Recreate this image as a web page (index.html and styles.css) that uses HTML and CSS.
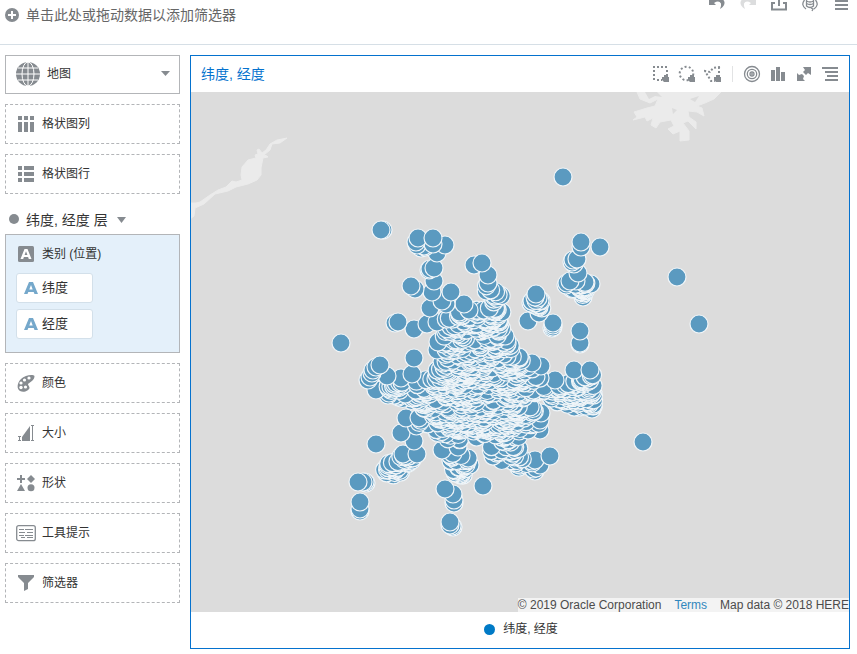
FILE: index.html
```html
<!DOCTYPE html>
<html lang="zh-CN">
<head>
<meta charset="utf-8">
<meta name="viewport" content="width=device-width, initial-scale=1">
<title>纬度, 经度</title>
<link rel="stylesheet" href="styles.css">
</head>
<body>
<header class="topbar">
  <button class="add-filter" type="button">
    <svg width="14" height="14" viewBox="0 0 14 14"><circle cx="7" cy="7" r="7" fill="#868b90"/><path d="M7 3v8M3 7h8" stroke="#fff" stroke-width="2"/></svg>
    <span>单击此处或拖动数据以添加筛选器</span>
  </button>
  <nav class="actions">
    <button type="button" aria-label="撤消"><svg width="18" height="12" viewBox="0 0 18 12"><path d="M1 0v5h7L6 3Q11 0 13 3.500 13.500 6 12 9 17 6 16.500 2L15.500 0z" fill="#868b90"/></svg></button>
    <button type="button" aria-label="重做"><svg width="18" height="12" viewBox="0 0 18 12"><path d="M17 0v5h-7l2-2Q7 0 5 3.500 4.500 6 6 9 1 6 1.500 2L2.500 0z" fill="#dcddde"/></svg></button>
    <button type="button" aria-label="导出"><svg width="18" height="12" viewBox="0 0 18 12"><path d="M5 3H2v6.500h14V3h-3M9 0v6" fill="none" stroke="#868b90" stroke-width="2"/></svg></button>
    <button type="button" aria-label="数据"><svg width="18" height="12" viewBox="0 0 18 12"><path d="M3.500 0Q-.5 5 5 9M14.500 0q4 5-1.500 9M5.500 0v6Q9 9 12.500 6V0M5.500 1q3.500 2 7 0M5.500 3.500q3.500 2 7 0M10 8l2 1-1 2" fill="none" stroke="#868b90" stroke-width="1.300"/></svg></button>
    <button type="button" aria-label="菜单"><svg width="18" height="12" viewBox="0 0 18 12"><path d="M3 1h13M3 5h13M3 9h13" stroke="#868b90" stroke-width="2"/></svg></button>
  </nav>
</header>
<main class="workspace">
  <aside class="grammar">
    <div class="chart-type">
      <svg width="24" height="24" viewBox="0 0 24 24"><circle cx="12" cy="12" r="12" fill="#868b90"/><path d="M12 0v24M0 12h24M2 6h20M2 18h20" stroke="#fff"/><ellipse cx="12" cy="12" rx="6" ry="12" fill="none" stroke="#fff"/></svg>
      <select aria-label="图表类型"><option>地图</option></select>
      <svg width="10" height="6" viewBox="0 0 10 6"><path d="M0 0h9L4.500 5z" fill="#868b90"/></svg>
    </div>
    <button class="zone" type="button"><svg width="20" height="20" viewBox="0 0 20 20"><path d="M2 2h4v4H2zm6 0h4v4H8zm6 0h4v4h-4zM2 8h4v10H2zm6 0h4v10H8zm6 0h4v10h-4z" fill="#868b90"/></svg>格状图列</button>
    <button class="zone" type="button"><svg width="20" height="20" viewBox="0 0 20 20"><path d="M2 2h4v4H2zm6 0h10v4H8zM2 8h4v4H2zm6 0h10v4H8zM2 14h4v4H2zm6 0h10v4H8z" fill="#868b90"/></svg>格状图行</button>
    <button class="layer" type="button">
      <svg width="12" height="12" viewBox="0 0 12 12"><circle cx="6" cy="5" r="5" fill="#868b90"/></svg>
      <span>纬度, 经度 层</span>
      <svg width="10" height="6" viewBox="0 0 10 6"><path d="M0 0h9L4.500 6z" fill="#868b90"/></svg>
    </button>
    <section class="category">
      <h2><svg width="20" height="20" viewBox="0 0 20 20"><rect x="2" y="2" width="16" height="16" rx="1.500" fill="#868b90"/><path fill-rule="evenodd" d="M8.500 5h3L15.500 15h-2.700l-.7-2H7.900l-.7 2H4.500zM10 7.300 8.600 11h2.800z" fill="#fff"/></svg>类别 (位置)</h2>
      <button class="chip" type="button"><svg width="14" height="14" viewBox="0 0 14 14"><path fill-rule="evenodd" d="M5 1h4l5 12h-3.500l-.8-2H4.300l-.8 2H0zM7 4 5.300 8.500h3.400z" fill="#75a8cb"/></svg>纬度</button>
      <button class="chip" type="button"><svg width="14" height="14" viewBox="0 0 14 14"><path fill-rule="evenodd" d="M5 1h4l5 12h-3.500l-.8-2H4.300l-.8 2H0zM7 4 5.300 8.500h3.400z" fill="#75a8cb"/></svg>经度</button>
    </section>
    <button class="zone" type="button"><svg width="20" height="20" viewBox="0 0 20 20"><path d="M18.500 3C17 1 9 2 5 6c-4 4-4.500 10-1 12 4 2 9-.5 9.500-3 .3-2-2.500-3-1-4.500 2-1.500 6-3.500 6-7.500z" fill="#868b90"/><g fill="#fff"><circle cx="13" cy="5" r="1.600"/><circle cx="8.500" cy="7" r="1.600"/><circle cx="5" cy="10" r="1.600"/><circle cx="5" cy="14.500" r="1.700"/><circle cx="9.500" cy="14" r="1.600"/></g></svg>颜色</button>
    <button class="zone" type="button"><svg width="20" height="20" viewBox="0 0 20 20"><path d="M6 18v-4l8-11v15z" fill="#868b90"/><path d="M2 13.500h3M2 17.500h3M3.500 13v5M15 2.500h3M15 17.500h3M16.500 2v16" stroke="#868b90" fill="none"/></svg>大小</button>
    <button class="zone" type="button"><svg width="20" height="20" viewBox="0 0 20 20"><path d="M5 2v8M1 6h8" stroke="#868b90" stroke-width="2"/><path d="M15 2l4 4-4 4-4-4zM5 11l4 7H1z" fill="#868b90"/><circle cx="15" cy="14.700" r="3.500" fill="#868b90"/></svg>形状</button>
    <button class="zone" type="button"><svg width="20" height="20" viewBox="0 0 20 20"><rect x=".7" y="2.700" width="18.600" height="15" rx="2" fill="#fff" stroke="#868b90" stroke-width="1.300"/><path d="M3 6.500h5M9 6.500h8M3 9.500h6M11 9.500h6M3 12.500h5M9 12.500h8M5 14.500h4M11 14.500h6" stroke="#868b90"/></svg>工具提示</button>
    <button class="zone" type="button"><svg width="20" height="20" viewBox="0 0 20 20"><path d="M2 2h16v2l-6 6v6l-4 2v-8L2 4z" fill="#868b90"/></svg>筛选器</button>
  </aside>
  <section class="viz">
    <div class="viz-head">
      <h1>纬度, 经度</h1>
      <div class="tools">
        <button type="button" aria-label="矩形选择"><svg width="18" height="18" viewBox="0 0 18 18"><path d="M1 2h15M2 5v12M5 15h5M15 5v5" fill="none" stroke="#868b90" stroke-width="2" stroke-dasharray="2 2"/><path d="M10 12h2v-2h4v2h1v5h-5l-2-2z" fill="#868b90"/></svg></button>
        <button type="button" aria-label="圆形选择"><svg width="18" height="18" viewBox="0 0 18 18"><circle cx="8.500" cy="8.500" r="6.800" fill="none" stroke="#868b90" stroke-width="2" stroke-dasharray="2 2.270"/><path d="M10 12h2v-2h4v2h1v5h-5l-2-2z" fill="#868b90"/></svg></button>
        <button type="button" aria-label="多边形选择"><svg width="18" height="18" viewBox="0 0 18 18"><path d="M16 2 9 3 6 7 1 6l3 5 3 5h4M15 2v8" fill="none" stroke="#868b90" stroke-width="2" stroke-dasharray="2 2"/><path d="M10 12h2v-2h4v2h1v5h-5l-2-2z" fill="#868b90"/></svg></button>
        <span class="rule"></span>
        <button type="button" aria-label="定位"><svg width="18" height="18" viewBox="0 0 18 18"><g fill="none" stroke="#868b90" stroke-width="1.300"><circle cx="9" cy="9" r="7.500"/><circle cx="9" cy="9" r="4.700"/><circle cx="9" cy="9" r="2"/></g><circle cx="9" cy="9" r="1" fill="#868b90"/></svg></button>
        <button type="button" aria-label="图表"><svg width="18" height="18" viewBox="0 0 18 18"><path d="M2 5h4v11H2zm5-3h4v14H7zm5 5h4v9h-4z" fill="#868b90"/></svg></button>
        <button type="button" aria-label="最大化"><svg width="18" height="18" viewBox="0 0 18 18"><path d="M8 2h8v8l-3-2-2 2-3-3 2-2zM2 8l2 2 3-1 2 2-1 3 2 2H2z" fill="#868b90"/></svg></button>
        <button type="button" aria-label="菜单"><svg width="18" height="18" viewBox="0 0 18 18"><path d="M1 3h16M4 7h13M6 11h11M4 15h13" stroke="#868b90" stroke-width="1.800"/></svg></button>
      </div>
    </div>
    <div class="map">
      <svg class="map-canvas" viewBox="191 92 658 520" preserveAspectRatio="xMidYMid slice" role="img" aria-label="纬度, 经度">
        <path fill="#ebebeb" stroke="#ebebeb" stroke-linejoin="round" d="M287 138 277 140 270 144 266 150 262 153 259 149 257 150 258 154 255 155 256 158 248 160 242 167 241 175 242 180 236 182 232 181 226 187 218 190 210 195 200 202 196 203 190 203V219L194 216 195 208 204 204 215 194 228 191 236 187 248 184 257 180 261 175 261 168 263 158 268 157 267 156 264 155 270 150 272 144 280 143z"/>
        <path fill="#ebebeb" stroke="#ebebeb" stroke-linejoin="round" d="M637 92 640 99 650 103 658 99 655 106 647 108 634 112 637 117 633 120 645 117 647 121 653 118 651 125 656 128 660 122 671 120 674 126 668 129 673 134 680 131 680 141 689 140 689 131 683 123 688 121 696 129 696 122 689 117 688 111 697 112 704 116 702 108 697 106 705 103 714 99 721 92z"/>
        <path fill="#dcdcdc" d="M645 92h12l5 5-7-1-6 3zM672 108l5 2-4 4zM690 99l9-3-4 6z"/>
        <g id="points" class="points"></g>
      </svg>
      <p class="credits"><span>© 2019 Oracle Corporation</span><a href="#terms">Terms</a><span>Map data © 2018 HERE</span></p>
    </div>
    <div class="legend"><span class="legend-dot"></span>纬度, 经度</div>
  </section>
</main>
<script src="points.js"></script>
</body>
</html>
```
FILE: styles.css
```css
* { box-sizing: border-box; }
body {
  margin: 0;
  min-height: 100vh;
  display: flex;
  flex-direction: column;
  background: #fff;
  color: #333;
  font: 12px/18px "Liberation Sans", "Noto Sans CJK SC", sans-serif;
}
button, select {
  font: inherit;
  color: inherit;
  background: none;
  border: 0;
  padding: 0;
  margin: 0;
  text-align: left;
}
button { cursor: pointer; }
svg { display: block; flex: none; }
h1, h2, p { margin: 0; font-weight: normal; }

.topbar {
  height: 45px;
  display: flex;
  justify-content: space-between;
  align-items: flex-start;
  border-bottom: 1px solid #d6dfe6;
}
.add-filter {
  display: flex;
  align-items: center;
  gap: 7px;
  padding: 5px;
  font-size: 14px;
  line-height: 20px;
  color: #666;
}
.actions { display: flex; gap: 13px; padding-right: 7px; }

.workspace {
  flex: 1;
  display: grid;
  grid-template-columns: 175px 1fr;
  gap: 10px;
  padding: 10px 7px 5px 5px;
}
.grammar { display: flex; flex-direction: column; gap: 10px; }
.chart-type {
  position: relative;
  height: 39px;
  display: flex;
  align-items: center;
  padding: 0 8px 2px 10px;
  border: 1px solid #b3b5b8;
}
.chart-type select {
  flex: 1;
  appearance: none;
  height: 36px;
  padding-left: 7px;
}
.zone {
  height: 40px;
  display: flex;
  align-items: center;
  gap: 6px;
  padding: 0 10px;
  border: 1px dashed #b3b5b8;
}
.layer {
  display: flex;
  align-items: center;
  gap: 6px;
  height: 30px;
  padding: 2px 3px 0;
  margin-bottom: -10px;
  font-size: 14px;
}
.layer span { margin-right: 3px; }
.category {
  height: 119px;
  display: flex;
  flex-direction: column;
  align-items: flex-start;
  gap: 6px;
  padding: 9px 10px;
  background: #e4f0fa;
  border: 1px solid #b3b5b8;
}
.category h2 {
  display: flex;
  align-items: center;
  gap: 6px;
  height: 20px;
  margin-bottom: 3px;
  font-size: 12px;
}
.chip {
  width: 77px;
  height: 30px;
  display: flex;
  align-items: center;
  gap: 4px;
  padding: 0 7px;
  background: #fff;
  border: 1px solid #d3e0ea;
  border-radius: 3px;
  font-size: 13px;
}

.viz {
  display: flex;
  flex-direction: column;
  min-width: 0;
  border: 1px solid #0572ce;
}
.viz-head {
  height: 36px;
  display: flex;
  align-items: center;
  justify-content: space-between;
  padding: 0 10px;
}
.viz-head h1 { font-size: 14px; line-height: 20px; color: #0572ce; }
.tools { display: flex; align-items: center; gap: 8px; }
.rule { width: 1px; height: 16px; margin: 0 2px; background: #e2e3e4; }
.map { position: relative; flex: 1; min-height: 300px; background: #dcdcdc; }
.map-canvas { position: absolute; inset: 0; width: 100%; height: 100%; }
.points { fill: #5b9ac0; stroke: #f0f5f8; stroke-width: 1.2; }
.credits {
  position: absolute;
  right: 0;
  bottom: 0;
  display: flex;
  gap: 13px;
  background: #f3f3f3;
  color: #4c4c4c;
  line-height: 14px;
  white-space: nowrap;
}
.credits a { color: #3187bd; text-decoration: none; }
.legend {
  height: 36px;
  display: flex;
  align-items: center;
  justify-content: center;
  gap: 8px;
  padding: 0 0 2px 2px;
}
.legend-dot { width: 11px; height: 11px; border-radius: 50%; background: #007ac6; }
```
FILE: points.js
```js
// Individually placed locations, as x, y pairs in map units.
const located = [
  563,177, 383,230, 381,230, 418,238, 433,238, 445,245, 416,242, 417,245, 437,253, 433,244,
  425,247, 421,248, 424,246, 434,268, 430,269, 429,270, 434,281, 474,265, 482,263, 488,275,
  488,283, 411,286, 415,289, 432,292, 451,292, 464,304, 430,308, 442,301, 446,304, 398,322,
  395,323, 414,329, 427,324, 437,322, 341,343, 414,358, 412,374, 380,365, 376,367, 373,370,
  372,373, 370,377, 368,380, 387,376, 401,378, 376,390, 389,393, 388,395, 398,396, 406,418,
  401,433, 414,441, 376,444, 403,454, 417,454, 366,483, 365,482, 363,482, 358,482, 360,502,
  360,509, 360,511, 445,489, 453,494, 454,500, 454,503, 450,522, 450,525, 452,526, 453,527,
  483,486, 442,450, 458,447, 581,242, 581,247, 600,247, 577,259, 573,260, 572,262, 574,264,
  578,273, 576,281, 570,281, 567,283, 566,285, 591,284, 586,287, 583,297, 536,294, 535,297,
  532,301, 531,303, 533,304, 538,298, 539,307, 539,313, 528,321, 553,323, 553,325, 553,327,
  552,328, 580,331, 580,343, 580,344, 677,277, 699,324, 643,442, 550,456, 535,460, 540,465,
  535,471, 533,469, 536,468, 541,413, 540,420, 540,430, 528,430, 532,363, 541,366, 555,380,
  574,370, 590,370, 592,409, 470,465, 437,350, 438,342, 505,336, 469,310
];

// Dense areas: number of locations and the outline that contains them.
const areas = [
  [40, [486,284, 502,296, 502,332, 486,330]],
  [100, [441,322, 460,309, 498,308, 504,340, 443,345]],
  [680, [438,362, 450,342, 505,338, 522,360, 526,400, 516,428, 457,431, 422,408, 418,395, 434,380]],
  [50, [385,384, 440,378, 440,408, 412,403, 390,394]],
  [120, [520,388, 560,385, 593,374, 594,406, 575,408, 543,397]],
  [14, [522,365, 543,368, 540,384, 522,386]],
  [20, [418,415, 440,416, 465,438, 455,442, 415,426]],
  [32, [462,428, 520,425, 520,441, 480,442]],
  [34, [448,450, 470,458, 463,479, 454,472]],
  [38, [383,470, 393,457, 412,454, 416,465, 391,477]],
  [34, [487,445, 508,438, 537,466, 534,472, 495,460]],
  [14, [522,403, 542,412, 539,430, 522,428]],
  [22, [566,285, 586,278, 586,292, 582,297]],
  [10, [531,300, 541,298, 542,308, 532,307]]
];

let seed = 20190;
function random() {
  seed = (seed * 16807) % 2147483647;
  return seed / 2147483647;
}

function inside(x, y, p) {
  let hit = false;
  for (let i = 0, j = p.length - 2; i < p.length; j = i, i += 2) {
    if ((p[i + 1] > y) !== (p[j + 1] > y) &&
        x < (p[j] - p[i]) * (y - p[i + 1]) / (p[j + 1] - p[i + 1]) + p[i]) hit = !hit;
  }
  return hit;
}

// Settlements clump together, which leaves sparser pockets between them.
function clumping(x, y) {
  return 0.5 + 0.5 * Math.sin(x / 5 + 2 * Math.sin(y / 9)) * Math.cos(y / 4 + 2 * Math.sin(x / 11));
}

const points = [];
for (let i = 0; i < located.length; i += 2) points.push([located[i], located[i + 1]]);
for (const [count, outline] of areas) {
  const xs = outline.filter((v, i) => i % 2 === 0);
  const ys = outline.filter((v, i) => i % 2 === 1);
  const left = Math.min(...xs), top = Math.min(...ys);
  const width = Math.max(...xs) - left, height = Math.max(...ys) - top;
  for (let n = 0; n < count;) {
    const x = left + random() * width, y = top + random() * height;
    if (inside(x, y, outline) && random() < clumping(x, y)) { points.push([x, y]); n++; }
  }
}

// Northern points overlap southern ones.
points.sort((a, b) => b[1] - a[1]);
const layer = document.getElementById("points");
for (const [x, y] of points) {
  const dot = document.createElementNS("http://www.w3.org/2000/svg", "circle");
  dot.setAttribute("cx", x);
  dot.setAttribute("cy", y);
  dot.setAttribute("r", 9);
  layer.appendChild(dot);
}
```
